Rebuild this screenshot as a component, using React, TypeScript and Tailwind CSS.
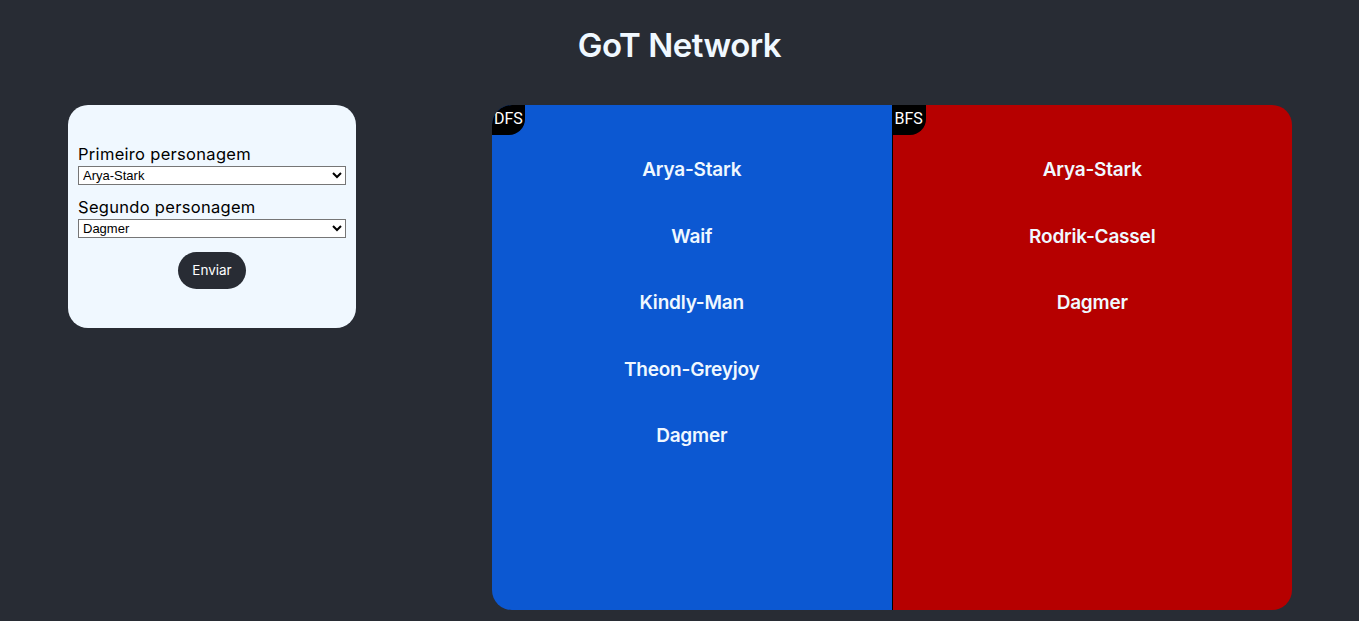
import { useState } from "react";

const characters = [
  "Arya-Stark",
  "Waif",
  "Kindly-Man",
  "Theon-Greyjoy",
  "Dagmer",
  "Rodrik-Cassel",
  "Jon-Snow",
  "Sansa-Stark",
];

const dfsPath = ["Arya-Stark", "Waif", "Kindly-Man", "Theon-Greyjoy", "Dagmer"];
const bfsPath = ["Arya-Stark", "Rodrik-Cassel", "Dagmer"];

const PathColumn = ({ label, names, color }: { label: string; names: string[]; color: string }) => {
  return (
    <div className={`relative flex-1 ${color}`}>
      <span className="absolute left-0 top-0 w-[33px] h-[30px] bg-black text-white text-[16px] font-['Roboto',sans-serif] pl-[2px] pt-[6px] rounded-br-[16px] leading-none">
        {label}
      </span>
      <div className="flex flex-col items-center pt-[52px] gap-[40.5px]">
        {names.map((n, i) => (
          <p key={i} className="text-[#f0f8ff] text-[19px] font-semibold tracking-[-0.2px] leading-[26px]">
            {n}
          </p>
        ))}
      </div>
    </div>
  );
};

export default function App() {
  const [first, setFirst] = useState("Arya-Stark");
  const [second, setSecond] = useState("Dagmer");

  return (
    <div className="min-h-[621px] bg-[#282c34] font-['Inter',sans-serif] pb-[11px]">
      <h1 className="text-center text-[#f0f8ff] text-[33px] font-semibold tracking-[-0.5px] pt-[24px] leading-[42px]">
        GoT Network
      </h1>
      <div className="flex mt-[39px] pl-[68px]">
        <form className="w-[288px] h-[223px] bg-[#f0f8ff] rounded-[20px] px-[10px] pt-[38px]">
          <label className="block text-[16.5px] tracking-[0.3px] leading-[23px] text-black">Primeiro personagem</label>
          <select
            value={first}
            onChange={(e) => setFirst(e.target.value)}
            className="block w-full h-[19px] bg-white border border-[#767676] text-[13px] font-['Liberation_Sans',sans-serif] text-black"
          >
            {characters.map((c) => (
              <option key={c}>{c}</option>
            ))}
          </select>
          <label className="block text-[16.5px] tracking-[0.3px] leading-[23px] text-black mt-[11px]">Segundo personagem</label>
          <select
            value={second}
            onChange={(e) => setSecond(e.target.value)}
            className="block w-full h-[19px] bg-white border border-[#767676] text-[13px] font-['Liberation_Sans',sans-serif] text-black"
          >
            {characters.map((c) => (
              <option key={c}>{c}</option>
            ))}
          </select>
          <div className="flex justify-center mt-[14px]">
            <button type="button" className="bg-[#282c34] text-white text-[13.5px] rounded-full px-[14px] h-[37px]">
              Enviar
            </button>
          </div>
        </form>
        <div className="flex w-[800px] h-[505px] ml-[136px] rounded-[20px] overflow-hidden">
          <PathColumn label="DFS" names={dfsPath} color="bg-[#0c58d2]" />
          <div className="w-px bg-black" />
          <PathColumn label="BFS" names={bfsPath} color="bg-[#b60000]" />
        </div>
      </div>
    </div>
  );
}
